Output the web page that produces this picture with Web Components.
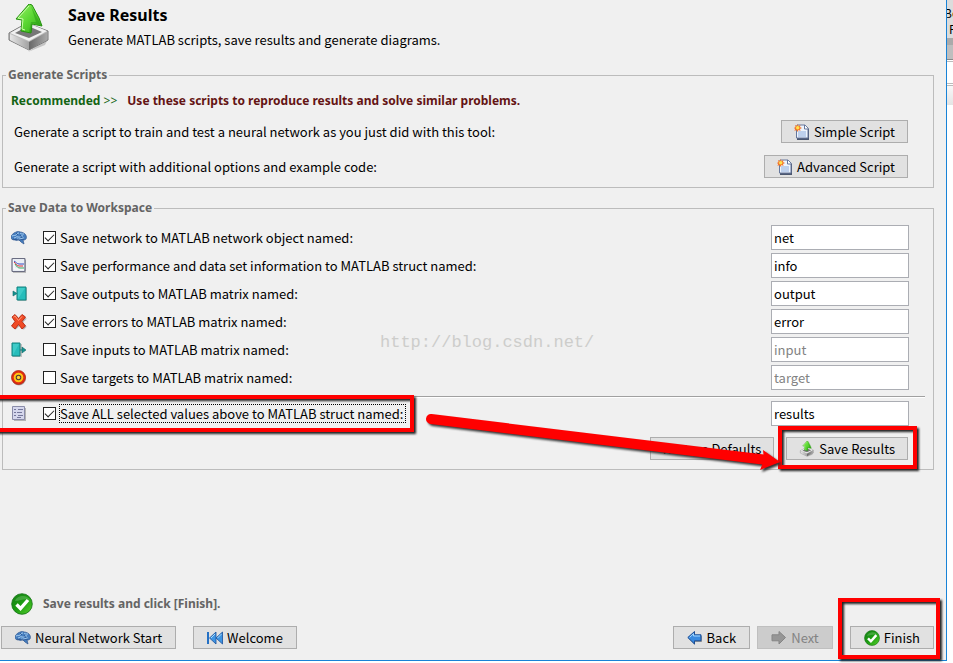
<!DOCTYPE html>
<html lang="en">
<head>
<meta charset="utf-8">
<title>Neural Network: Save Results</title>
<style>
  body {
    margin: 0;
    color: #000;
    font: 13px/20px "Noto Sans CJK SC", "Noto Sans", sans-serif;
  }
</style>
</head>
<body>
<nn-window>
  <nn-header slot="header" heading="Save Results">Generate MATLAB scripts, save results and generate diagrams.</nn-header>

  <nn-group heading="Generate Scripts">
    <nn-scripts></nn-scripts>
  </nn-group>

  <nn-group heading="Save Data to Workspace">
    <save-form></save-form>
  </nn-group>

  <nn-footer slot="footer">Save results and click [Finish].</nn-footer>
</nn-window>

<script>
const icons = {
  save: `<svg viewBox="0 0 48 48">
    <defs>
      <linearGradient id="g" x1="0" y1="0" x2="1" y2="1"><stop offset="0" stop-color="#9bf26c"/><stop offset=".5" stop-color="#5cd834"/><stop offset="1" stop-color="#30a914"/></linearGradient>
      <linearGradient id="l" x1="0" y1="0" x2="1" y2="0"><stop offset="0" stop-color="#e6e6e6"/><stop offset="1" stop-color="#a2a2a2"/></linearGradient>
      <linearGradient id="r" x1="0" y1="0" x2="1" y2="0"><stop offset="0" stop-color="#686868"/><stop offset="1" stop-color="#a8a8a8"/></linearGradient>
    </defs>
    <path d="M5 37l18 11 20-13-3 6-17 7z" fill="#000" opacity=".18"/>
    <path d="M4 29L22 19l21 8v9L24 46 4 36z" fill="#bbb" stroke="#777"/>
    <path d="M5 29l18-10 19 8-18 10z" fill="#f0f0f0"/>
    <path d="M10 29l13-7 14 6-13 6z" fill="#777"/>
    <path d="M5 30l19 8v8L5 36z" fill="url(#l)"/>
    <path d="M24 38l18-10v8l-18 10z" fill="url(#r)"/>
    <path d="M24 0L11 15l6 1-1 11 10 2 1 -9 10 2L34 14 27 1z" fill="url(#g)" stroke="#25900f" stroke-linejoin="round"/>
    <path d="M24 2L13 14l5 1-1 10 3 1" fill="none" stroke="#c9ffa9" stroke-width="1"/>
    <path d="M27 19l9 2L26 2l5 16-5 0-2 10h2z" fill="#239512" opacity=".45"/>
  </svg>`,
  brain: `<svg viewBox="0 0 16 16">
    <path d="M0 7c0-2 2-3 3-4 2-1 4-2 6-1 2 0 4 1 5 2 1 1 2 3 1 5-1 1-2 1-3 1l1 4-3-2-2-2c-2 0-2 1-4 0C1 10 0 9 0 7z" fill="#477fc0" stroke="#2c548e" stroke-width=".7"/>
    <path d="M1 6c2-1 3 0 4-1s1-2 3-2M3 8c2 0 2-2 4-1s3-2 5-1M6 9c2 1 4-1 7-1M9 3c1 1 2 1 4 1" fill="none" stroke="#a9d0f2" stroke-width="1"/>
    <path d="M2 9c3 1 4 0 7 1l4-1M5 3l2 2M9 5l2 3" fill="none" stroke="#244c86" stroke-width=".7"/>
  </svg>`,
  chart: `<svg viewBox="0 0 16 16">
    <path d="M2 2h13v13H2z" fill="#999" opacity=".6"/>
    <rect x="1" y="0.500" width="13" height="13" rx="1" fill="#e9edf4" stroke="#6a6d82" stroke-width="1.200"/>
    <path d="M3 2v9h10" fill="none" stroke="#fff"/>
    <path d="M3 3c2 1 3 3 5 3h5" fill="none" stroke="#354cc0" stroke-width="1"/>
    <path d="M3 4c2 2 3 4 5 4h4" fill="none" stroke="#d33"/>
    <path d="M4 6c2 3 3 4 5 4h4" fill="none" stroke="#38a55c" stroke-width="1"/>
  </svg>`,
  output: `<svg viewBox="0 0 16 16">
    <path d="M7 2h9v13H7z" fill="#777" opacity=".4"/>
    <path d="M6 1h9v13H6z" fill="#27bdbb" stroke="#11817f"/>
    <path d="M7 2h7L7 13z" fill="#54d7d3" opacity=".55"/>
    <path d="M2 5v5l4-2.500z" fill="#159391" stroke="#0d6a69" stroke-width=".6"/>
  </svg>`,
  input: `<svg viewBox="0 0 16 16">
    <path d="M2 2h9v13H2z" fill="#777" opacity=".4"/>
    <path d="M1 1h8v13H1z" fill="#27bdbb" stroke="#11817f"/>
    <path d="M2 2h6L2 13z" fill="#54d7d3" opacity=".55"/>
    <path d="M9 8h3" stroke="#11817f"/>
    <path d="M11 5v6l4-3z" fill="#159391" stroke="#0d6a69" stroke-width=".6"/>
  </svg>`,
  error: `<svg viewBox="0 0 16 16">
    <path d="M2 3l3-2 3 4 4-4 3 3-4 4 4 4-3 3-4-4-4 4-3-3 4-4z" fill="#666" opacity=".4" transform="translate(.7 .8)"/>
    <path d="M1 3l3-2.500 3.500 4L11 .5l3.500 2.500-3.500 4.500L14.500 12l-3.500 3-3.500-4.500L4 15 .5 12l3.500-4.500z" fill="#f04a25" stroke="#b52710" stroke-width=".9" stroke-linejoin="round"/>
    <path d="M2.500 3L4 2l3.500 4.500L11 2.500" fill="none" stroke="#ff9a75"/>
  </svg>`,
  target: `<svg viewBox="0 0 16 16">
    <circle cx="8" cy="8.500" r="7" fill="#777" opacity=".5"/>
    <circle cx="7.500" cy="7.500" r="7" fill="#e02d12" stroke="#a81a08" stroke-width=".7"/>
    <circle cx="7.500" cy="7.500" r="3.800" fill="#4a3a3a" stroke="#ffc414" stroke-width="2"/>
    <circle cx="7.500" cy="7.500" r="1.700" fill="#ffd12b"/>
  </svg>`,
  struct: `<svg viewBox="0 0 16 16">
    <path d="M3 2h12v13H3z" fill="#777" opacity=".5"/>
    <path d="M1.500 .5h12v13h-12z" fill="#d5d7ec" stroke="#8a8ca8"/>
    <path d="M3 3.500h2M3 6.500h2M3 9.500h2M7 3.500h5M6 6.500h5M7 9.500h5M6 11.500h4" stroke="#75779a"/>
  </svg>`,
  script: `<svg viewBox="0 0 16 16">
    <path d="M4 2h8l3 3v11H3V6z" fill="#4b566e"/>
    <path d="M3 1h8l3 3v10H2.500V5z" fill="#eef4fc" stroke="#66779c"/>
    <path d="M4 7h8v6H4z" fill="#bed0ec"/>
    <path d="M10.500 1v4H14" fill="#fff" stroke="#66779c"/>
    <path d="M3.500 0l1 2 2-1-.5 2 2 1-2 1 .5 2-2-1-1 2-1-2-2 1 .6-2L0 4l1.500-1L1 1l2 1z" fill="#f4762c"/>
    <circle cx="3.700" cy="3.700" r="1.700" fill="#ffe34c"/>
  </svg>`,
  rewind: `<svg viewBox="0 0 16 16">
    <path d="M0 2h2v12H0z" fill="#2470c4"/>
    <path d="M9 2v12L2.500 8z" fill="#3f94e2" stroke="#174f9b" stroke-width=".8"/>
    <path d="M15.500 2v12L9 8z" fill="#3f94e2" stroke="#174f9b" stroke-width=".8"/>
    <path d="M8 4L4 8M14.500 4l-4 4" stroke="#a6dafb"/>
  </svg>`,
  back: `<svg viewBox="0 0 16 16">
    <path d="M2 9l6 6v-3h7V6z" fill="#555" opacity=".5"/>
    <path d="M.8 7.500L7.500 1.500v3.300H14v6H7.500V14z" fill="#388ae0" stroke="#1c4d94" stroke-linejoin="round"/>
    <path d="M2.500 7.500l4-3.800V6H13" fill="none" stroke="#a1d6ff"/>
  </svg>`,
  next: `<svg viewBox="0 0 16 16">
    <path d="M14.500 7.500L8 1.500v3.300H1v6h7V14z" fill="#969696" stroke="#858585" stroke-linejoin="round"/>
  </svg>`,
  ok: `<svg viewBox="0 0 22 22">
    <defs><linearGradient id="k" x1="0" y1="0" x2="1" y2="1"><stop offset="0" stop-color="#178017"/><stop offset=".5" stop-color="#1c9c12"/><stop offset="1" stop-color="#59d22b"/></linearGradient></defs>
    <circle cx="11" cy="11" r="10.300" fill="url(#k)" stroke="#137114" stroke-width=".8"/>
    <path d="M4 8c2-6 12-7 15-1-6-2-9 1-15 1z" fill="#fff" opacity=".18"/>
    <path d="M5.500 11.500l4 4L17 7" fill="none" stroke="#fff" stroke-width="3.400"/>
  </svg>`
}

function render (element, html) {
  const template = document.createElement('template')
  template.innerHTML = html
  element.attachShadow({ mode: 'open' }).appendChild(template.content.cloneNode(true))
}

customElements.define('nn-icon',
  class extends HTMLElement {
    constructor () {
      super()
      render(this, `
        <style>
          :host { display: block; flex: none; width: 16px; height: 16px; }
          svg { display: block; width: 100%; height: 100%; }
        </style>
        ${icons[this.getAttribute('name')]}`)
    }
  })

// red frame drawn round whatever positioned box it is put in
customElements.define('red-mark',
  class extends HTMLElement {
    constructor () {
      super()
      render(this, `
        <style>
          :host {
            position: absolute;
            z-index: 2;
            box-sizing: border-box;
            border: 4px solid #f00;
            filter: drop-shadow(2px 2px 1px #222);
            pointer-events: none;
          }
        </style>`)
    }
  })

customElements.define('nn-button',
  class extends HTMLElement {
    constructor () {
      super()
      const icon = this.getAttribute('icon')
      render(this, `
        <style>
          :host { display: block; flex: none; }
          button {
            display: flex;
            align-items: center;
            gap: 4px;
            box-sizing: border-box;
            height: 23px;
            padding: 0 var(--button-padding, 12px);
            border: 1px solid #adadad;
            background: #e1e1e1;
            color: #000;
            font: inherit;
            white-space: nowrap;
          }
          button:disabled { background: #ccc; border-color: #bfbfbf; color: #838383; }
        </style>
        <button type="button" ${this.hasAttribute('disabled') ? 'disabled' : ''}>
          ${icon ? `<nn-icon name="${icon}"></nn-icon>` : ''}<slot></slot>
        </button>`)
    }
  })

customElements.define('nn-header',
  class extends HTMLElement {
    constructor () {
      super()
      render(this, `
        <style>
          :host { display: flex; gap: 15px; box-sizing: border-box; min-height: 66px; padding: 4px 5px 0; }
          nn-icon { width: 48px; height: 48px; }
          h1 { margin: 0 0 5px; font: bold 16px/22px "Noto Sans", sans-serif; }
          p { margin: 0; line-height: 18px; }
        </style>
        <nn-icon name="save"></nn-icon>
        <div>
          <h1>${this.getAttribute('heading')}</h1>
          <p><slot></slot></p>
        </div>`)
    }
  })

customElements.define('nn-group',
  class extends HTMLElement {
    constructor () {
      super()
      render(this, `
        <style>
          :host { display: block; margin: 0 12px 11px 2px; }
          fieldset { min-width: 0; margin: 0; padding: 6px 0 9px 3px; border: 1px solid #bcbcbc; }
          legend { padding: 0 2px; color: #646464; font: bold 12px/18px "Noto Sans", sans-serif; }
        </style>
        <fieldset>
          <legend>${this.getAttribute('heading')}</legend>
          <slot></slot>
        </fieldset>`)
    }
  })

customElements.define('nn-scripts',
  class extends HTMLElement {
    constructor () {
      super()
      render(this, `
        <style>
          :host { display: block; padding: 0 25px 0 8px; }
          p { margin: 0 -3px 8px; color: #641414; font: bold 12px/22px "Noto Sans", sans-serif; }
          .tip { margin-right: 10px; color: #146414; }
          .tip span { font-weight: normal; }
          .row { display: flex; justify-content: space-between; align-items: center; }
          .row + .row { margin-top: 12px; }
        </style>
        <p><span class="tip">Recommended <span>&gt;&gt;</span></span>Use these scripts to reproduce results and solve similar problems.</p>
        <div class="row">
          <span>Generate a script to train and test a neural network as you just did with this tool:</span>
          <nn-button icon="script">Simple Script</nn-button>
        </div>
        <div class="row">
          <span>Generate a script with additional options and example code:</span>
          <nn-button icon="script">Advanced Script</nn-button>
        </div>`)
    }
  })

customElements.define('save-row',
  class extends HTMLElement {
    constructor () {
      super()
      const checked = this.hasAttribute('checked')
      const marked = this.hasAttribute('marked')
      render(this, `
        <style>
          :host { display: flex; justify-content: space-between; align-items: center; height: 25px; padding-right: 24px; }
          .lead { position: relative; display: flex; align-items: center; height: 100%; }
          nn-icon { margin-right: 16px; }
          [type=checkbox] {
            appearance: none;
            display: grid;
            place-items: center;
            box-sizing: border-box;
            width: 13px;
            height: 13px;
            margin: 0 3px 0 0;
            border: 1px solid #222;
            background: #fff;
          }
          [type=checkbox]:checked::before {
            content: "";
            width: 9px;
            height: 5px;
            box-sizing: border-box;
            margin-bottom: 3px;
            border: solid #222;
            border-width: 0 0 1px 1px;
            transform: rotate(-45deg);
          }
          label { padding-right: 1px; line-height: 17px; border: 1px dotted transparent; white-space: nowrap; }
          :host([marked]) label { border-color: #000; }
          [type=text] {
            box-sizing: border-box;
            width: 138px;
            height: 25px;
            padding: 0 2px;
            border: 1px solid #abadb3;
            background: #fff;
            color: #000;
            font: inherit;
          }
          [type=text]:disabled { color: #838383; }
          red-mark { inset: -6px -8px -6px -20px; }
        </style>
        <div class="lead">
          <nn-icon name="${this.getAttribute('icon')}"></nn-icon>
          <input type="checkbox" id="save" ${checked ? 'checked' : ''}>
          <label for="save" id="label"><slot></slot></label>
          ${marked ? '<red-mark></red-mark>' : ''}
        </div>
        <input type="text" id="name" aria-labelledby="label" value="${this.getAttribute('value')}" ${checked ? '' : 'disabled'}>`)

      const name = this.shadowRoot.querySelector('#name')
      this.shadowRoot.querySelector('#save').addEventListener('change', e => {
        name.disabled = !e.target.checked
      })
    }
  })

customElements.define('save-form',
  class extends HTMLElement {
    constructor () {
      super()
      render(this, `
        <style>
          :host { position: relative; display: block; padding: 2px 0 0 5px; }
          .rows { display: grid; gap: 3px; }
          hr { margin: 6px 8px 4px 0; border: solid #a0a0a0; border-width: 1px 0 0; box-shadow: 0 1px #fff; }
          .actions { display: flex; justify-content: flex-end; gap: 12px; margin-top: 11px; padding-right: 25px; }
          .save { position: relative; }
          .save red-mark { inset: -11px -9px -9px -8px; }
          .arrow {
            position: absolute;
            z-index: 3;
            top: -27px;
            right: calc(100% + 5px);
            width: 362px;
            height: 66px;
            filter: drop-shadow(2px 2px 1px #333);
            pointer-events: none;
          }
          .watermark {
            position: absolute;
            top: 110px;
            left: 374px;
            color: #cdcdcb;
            font: 17px/20px "Liberation Mono", monospace;
          }
        </style>
        <div class="rows">
          <save-row icon="brain" value="net" checked>Save network to MATLAB network object named:</save-row>
          <save-row icon="chart" value="info" checked>Save performance and data set information to MATLAB struct named:</save-row>
          <save-row icon="output" value="output" checked>Save outputs to MATLAB matrix named:</save-row>
          <save-row icon="error" value="error" checked>Save errors to MATLAB matrix named:</save-row>
          <save-row icon="input" value="input">Save inputs to MATLAB matrix named:</save-row>
          <save-row icon="target" value="target">Save targets to MATLAB matrix named:</save-row>
        </div>
        <hr>
        <save-row icon="struct" value="results" checked marked>Save ALL selected values above to MATLAB struct named:</save-row>
        <div class="actions">
          <nn-button>Restore Defaults</nn-button>
          <div class="save">
            <nn-button icon="save">Save Results</nn-button>
            <red-mark></red-mark>
            <svg class="arrow" viewBox="418 410 362 66">
              <path d="M430 419L766 460" stroke="#f00" stroke-width="10" stroke-linecap="round"/>
              <path d="M762 450l17 12-20 8 4-10z" fill="#f00"/>
            </svg>
          </div>
        </div>
        <div class="watermark">http://blog.csdn.net/</div>`)
    }
  })

customElements.define('nn-footer',
  class extends HTMLElement {
    constructor () {
      super()
      render(this, `
        <style>
          :host { --button-padding: 13px; display: block; padding: 0 12px 11px 1px; }
          .status {
            display: flex;
            align-items: center;
            gap: 10px;
            margin: 0 0 11px 10px;
            color: #646464;
            font: bold 12px/22px "Noto Sans", sans-serif;
          }
          .status nn-icon { width: 22px; height: 22px; }
          nav { display: flex; }
          .welcome, .finish { margin-left: 17px; }
          .back { margin: 0 7px 0 auto; }
          .finish { position: relative; }
          red-mark { inset: -28px -6px -10px -12px; }
        </style>
        <div class="status"><nn-icon name="ok"></nn-icon><slot></slot></div>
        <nav>
          <nn-button icon="brain">Neural Network Start</nn-button>
          <nn-button class="welcome" icon="rewind">Welcome</nn-button>
          <nn-button class="back" icon="back">Back</nn-button>
          <nn-button icon="next" disabled>Next</nn-button>
          <div class="finish">
            <nn-button icon="ok">Finish</nn-button>
            <red-mark></red-mark>
          </div>
        </nav>`)
    }
  })

customElements.define('nn-window',
  class extends HTMLElement {
    constructor () {
      super()
      render(this, `
        <style>
          :host { display: flex; min-height: 100vh; overflow: hidden; background: #fff; }
          main {
            flex: 1;
            min-width: 0;
            display: flex;
            flex-direction: column;
            margin-bottom: 2px;
            border: solid #1883d7;
            border-width: 0 1px 1px 0;
            background: #f0f0f0;
          }
          .footer { margin-top: auto; }
          /* edge of the window that lies behind this one */
          aside {
            width: 6px;
            overflow: hidden;
            box-sizing: border-box;
            padding-top: 5px;
            background: linear-gradient(#dcdcdc 38px, #aaa 38px 45px, #bebebe 45px 59px, #888 59px 60px, #fff 60px 61px, #bbb 61px 62px, #fff 62px 83px, #bbb 83px 84px, #fff 84px 85px, #bbb 85px 86px, #f8f8f8 86px, #e4e4e4 105px, #fff 105px);
            font-size: 12px;
            line-height: 16px;
            white-space: nowrap;
          }
          aside div { text-indent: -3px; }
          aside div + div { text-indent: 2px; }
        </style>
        <main>
          <slot name="header"></slot>
          <slot></slot>
          <div class="footer"><slot name="footer"></slot></div>
        </main>
        <aside><div>Bo</div><div>P</div></aside>`)
    }
  })
</script>
</body>
</html>
